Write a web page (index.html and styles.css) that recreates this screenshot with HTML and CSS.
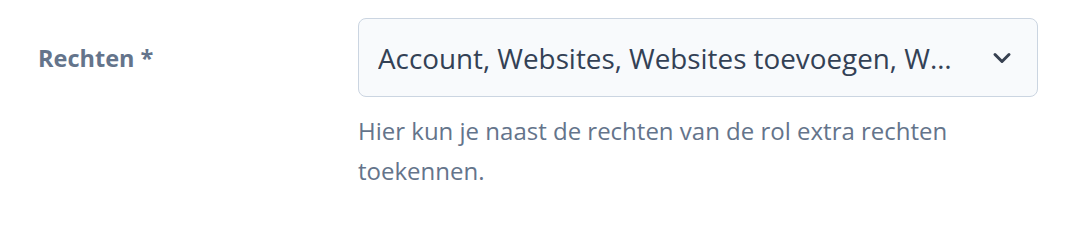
FILE: index.html
```html
<!DOCTYPE html>
<html lang="nl">
<head>
    <meta charset="UTF-8">
    <meta name="viewport" content="width=device-width, initial-scale=1.0">
    <title>Rechten</title>
    <link rel="stylesheet" href="styles.css">
</head>
<body>
    <div class="form-row">
        <!-- Label -->
        <label class="field-label" for="rechten">Rechten *</label>

        <div class="field">
            <!-- Multiselect -->
            <div class="select-box" id="rechten">
                <span class="select-value">Account, Websites, Websites toevoegen, Websites verwijderen</span>
                <svg class="chevron" width="20" height="20" viewBox="0 0 20 20" fill="none">
                    <path d="M3 6.5l7 7 7-7" stroke="#374151" stroke-width="3" stroke-linecap="round" stroke-linejoin="round"/>
                </svg>
            </div>
            <p class="help-text">Hier kun je naast de rechten van de rol extra rechten toekennen.</p>
        </div>
    </div>
</body>
</html>
```

FILE: styles.css
```css
body {
    margin: 0;
    font-family: "Open Sans", "Noto Sans", Arial, sans-serif;
    background-color: #ffffff;
}

/* Rij met label en veld */
.form-row {
    display: grid;
    grid-template-columns: 320px 680px;
    padding: 18px 0 0 38px;
}

.field-label {
    display: flex;
    align-items: center;
    height: 80px;
    font-size: 23.5px;
    font-weight: 700;
    color: #64748b;
}

/* Select */
.select-box {
    display: flex;
    align-items: center;
    height: 77px;
    padding: 0 25px 0 19px;
    border: 1px solid #cbd5e1;
    border-radius: 8px;
    background-color: #f8fafc;
}

.select-value {
    flex: 1;
    min-width: 0;
    margin-right: 31px;
    white-space: nowrap;
    overflow: hidden;
    text-overflow: ellipsis;
    font-size: 27.8px;
    color: #334155;
}

.chevron {
    flex-shrink: 0;
}

.help-text {
    margin: 14px 0 0;
    font-size: 24px;
    line-height: 40px;
    color: #64748b;
    max-width: 620px;
}
```
